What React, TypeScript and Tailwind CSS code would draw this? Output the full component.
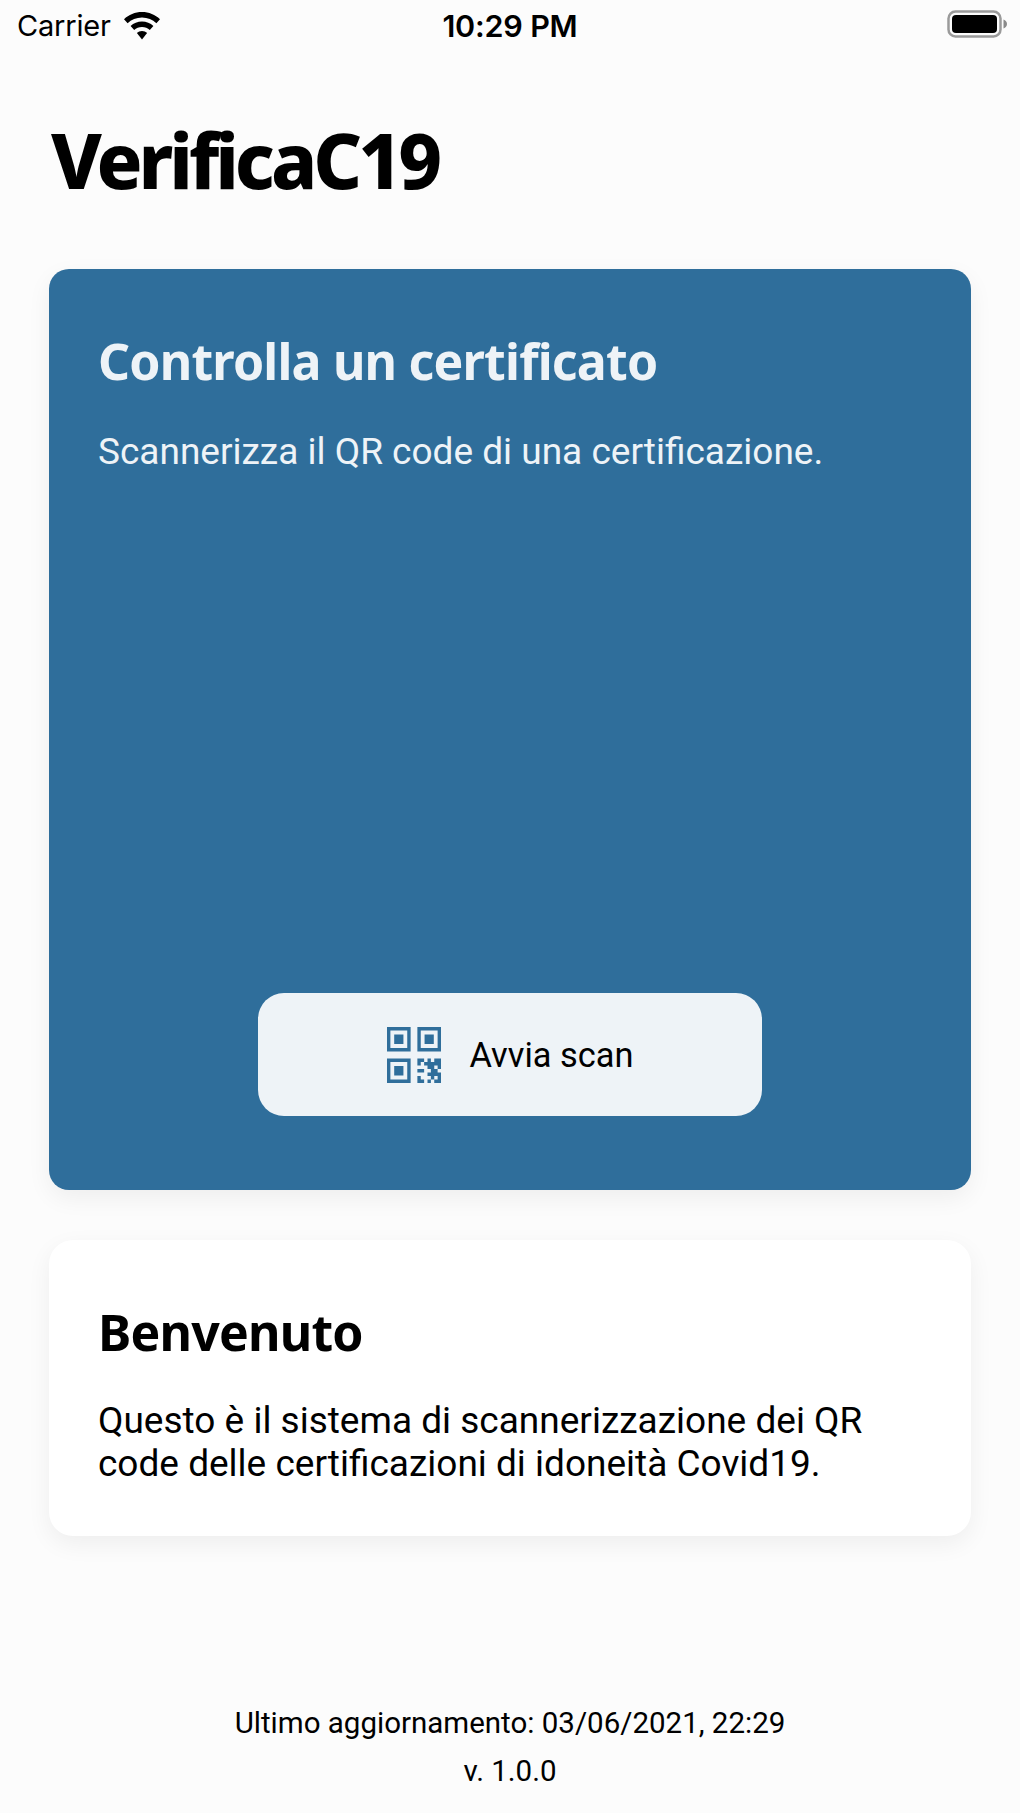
import React from "react";

const WifiIcon = () => (
  <svg width="38" height="28" viewBox="0 0 38 28" fill="#000">
    <path d="M19 0C12 0 5.800 2.700 1 7.200l3.600 4C8.400 7.700 13.400 5.500 19 5.500s10.600 2.200 14.400 5.700l3.600-4C32.200 2.700 26 0 19 0z" />
    <path d="M19 9.500c-4.400 0-8.400 1.700-11.400 4.500l3.600 4c2-1.900 4.800-3 7.800-3s5.800 1.100 7.800 3l3.600-4c-3-2.800-7-4.500-11.400-4.500z" />
    <path d="M19 19c-2 0-3.800.8-5.100 2L19 27.500 24.100 21c-1.300-1.200-3.100-2-5.100-2z" />
  </svg>
);

const BatteryIcon = () => (
  <svg width="60" height="28" viewBox="0 0 60 28">
    <rect x="1.500" y="1.500" width="52" height="25" rx="7" fill="none" stroke="#9a9a9a" strokeWidth="2.500" />
    <rect x="5" y="5" width="45" height="18" rx="4" fill="#000" />
    <path d="M56.500 9.500c2 .8 3.500 2.500 3.500 4.500s-1.500 3.700-3.500 4.500z" fill="#8a8a8a" />
  </svg>
);

// QR code glyph, 24 unit grid
const QrIcon = () => (
  <svg width="54" height="56" viewBox="0 0 24 24" preserveAspectRatio="none" fill="#2f6e9b">
    <path fillRule="evenodd" d="M0 0h10.500v10.500H0zM1.500 1.500v7.500h7.500V1.500zM3.200 3.200h4.100v4.100H3.200z" />
    <path fillRule="evenodd" d="M13.500 0H24v10.500H13.500zM15 1.500v7.500h7.500V1.500zM16.700 3.200h4.100v4.100h-4.100z" />
    <path fillRule="evenodd" d="M0 13.500h10.500V24H0zM1.500 15v7.500h7.500V15zM3.200 16.700h4.100v4.100H3.200z" />
    <path d="M13.500 13.500h3V15h-1.500v1.500h-1.500zM18 13.500h1.500V15H21v-1.500h3V18h-1.500v-1.500H21V18h1.500v1.500H24V24h-3v-1.500h1.500V21H21v1.500h-1.500V24H18v-1.500h1.500V21H18v-1.500h1.500V18H18v-1.500h-1.500V15H18zM13.500 18h3v1.500h-3zM13.500 21H15v1.500h1.500V24h-3z" />
  </svg>
);

const App = () => {
  return (
    <div className="w-[1020px] h-[1813px] flex flex-col bg-[#fcfcfc] text-black font-['Roboto',sans-serif]">
      {/* Status bar */}
      <div className="h-[50px] px-[17px] pt-[9px] grid grid-cols-3 items-start">
        <div className="flex items-center gap-[12px] font-['Inter',sans-serif] text-[29px] leading-[34px] tracking-[-0.2px]">
          <span>Carrier</span>
          <WifiIcon />
        </div>
        <div className="text-center font-['Inter',sans-serif] font-semibold text-[30.500px] leading-[34px] tracking-[-0.2px]">10:29 PM</div>
        <div className="flex justify-end -mr-[4px] pt-[1px]">
          <BatteryIcon />
        </div>
      </div>

      <div className="flex-1 flex flex-col px-[49px]">
        <h1 className="mt-[68px] h-[151px] pl-[2px] font-['Noto_Sans',sans-serif] font-extrabold text-[76px] leading-[84px] tracking-[-4px] [font-stretch:semi-condensed]">
          VerificaC19
        </h1>

        {/* Scan card */}
        <div className="h-[921px] flex flex-col rounded-[20px] bg-[#2f6e9b] px-[50px] pt-[62px] pb-[74px] shadow-[0_8px_24px_rgba(0,0,0,0.06)]">
          <h2 className="-ml-[1px] font-['Noto_Sans',sans-serif] font-bold text-[#eef3f7] text-[50px] leading-[60px] tracking-[-0.8px] [font-stretch:semi-condensed]">
            Controlla un certificato
          </h2>
          <p className="mt-[39px] -ml-[1px] text-[#eef3f7] text-[37px] leading-[44px]">
            Scannerizza il QR code di una certificazione.
          </p>
          <div className="mt-auto flex justify-center">
            <button className="w-[504px] h-[123px] flex items-center justify-center gap-[29px] rounded-[26px] bg-[#eef3f7] text-[34.400px] leading-[40px]">
              <QrIcon />
              <span>Avvia scan</span>
            </button>
          </div>
        </div>

        {/* Welcome card */}
        <div className="mt-[50px] h-[296px] rounded-[24px] bg-white px-[50px] pt-[62px] shadow-[0_8px_24px_rgba(0,0,0,0.06)]">
          <h2 className="-ml-[1px] font-['Noto_Sans',sans-serif] font-bold text-[50px] leading-[60px] tracking-[-0.8px] [font-stretch:semi-condensed]">Benvenuto</h2>
          <p className="mt-[37px] -ml-[1px] text-[37px] leading-[43px]">
            Questo è il sistema di scannerizzazione dei QR
            <br />
            code delle certificazioni di idoneità Covid19.
          </p>
        </div>

        {/* Footer */}
        <div className="mt-auto pb-[18px] text-center text-[29.500px] leading-[48px]">
          <p>Ultimo aggiornamento: 03/06/2021, 22:29</p>
          <p>v. 1.0.0</p>
        </div>
      </div>
    </div>
  );
};

export default App;
